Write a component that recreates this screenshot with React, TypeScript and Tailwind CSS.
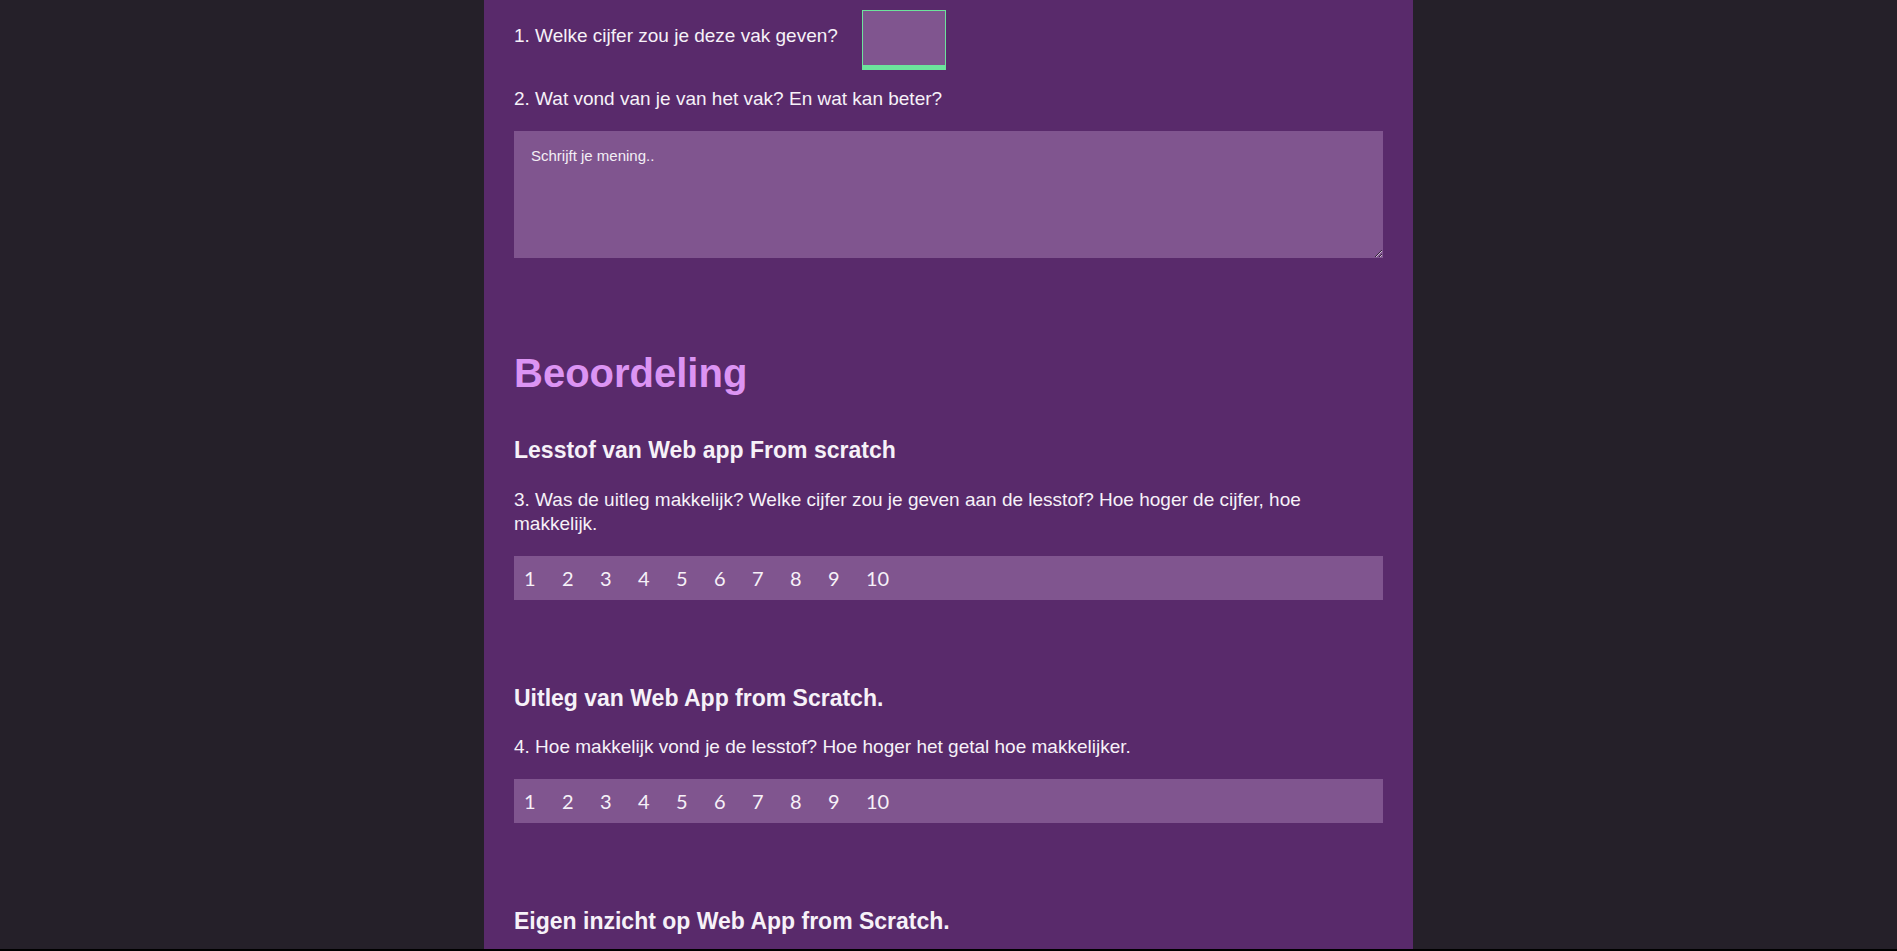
import { useState } from 'react';

const SCORES = [1, 2, 3, 4, 5, 6, 7, 8, 9, 10];

function ScoreBar({ name }: { name: string }) {
  const [picked, setPicked] = useState<number | null>(null);

  return (
    <div className="mt-[20px] flex h-[44px] items-center bg-[#80558f] pl-[10px]">
      {SCORES.map((n) => (
        <label
          key={n}
          className={`w-[38px] shrink-0 cursor-pointer font-['Lato',sans-serif] text-[20px] ${
            picked === n ? 'text-[#6ce39c]' : 'text-[#f6f1f8]'
          }`}
        >
          <input
            type="radio"
            name={name}
            className="hidden"
            checked={picked === n}
            onChange={() => setPicked(n)}
          />
          {n}
        </label>
      ))}
    </div>
  );
}

export default function App() {
  return (
    <div className="min-h-screen bg-[#252029] font-['Liberation_Sans','Noto_Sans',sans-serif] text-[#f6f1f8]">
      <main className="mx-auto min-h-screen w-[929px] bg-[#592a6b] px-[30px] pb-[80px] text-[19px] leading-[24px]">
        {/* vraag 1 */}
        <div className="flex items-start pt-[10px]">
          <p className="mt-[14px]">1. Welke cijfer zou je deze vak geven?</p>
          <input
            type="text"
            className="ml-[24px] h-[60px] w-[84px] border border-b-[5px] border-[#6ce39c] bg-[#80558f] outline-none"
          />
        </div>

        <p className="mt-[17px]">2. Wat vond van je van het vak? En wat kan beter?</p>

        <textarea
          placeholder="Schrijft je mening.."
          className="mt-[20px] block h-[127px] w-full bg-[#80558f] px-[17px] py-[15px] text-[15px] leading-[20px] text-white outline-none placeholder:text-[#f3eef5]"
        />

        <h2 className="mt-[93px] text-[40px] font-bold leading-[44px] text-[#dc94f3]">Beoordeling</h2>

        <h3 className="mt-[41px] text-[23px] font-bold leading-[28px]">Lesstof van Web app From scratch</h3>
        <p className="mt-[24px]">
          3. Was de uitleg makkelijk? Welke cijfer zou je geven aan de lesstof? Hoe hoger de cijfer, hoe
          makkelijk.
        </p>
        <ScoreBar name="lesstof" />

        <h3 className="mt-[84px] text-[23px] font-bold leading-[28px]">Uitleg van Web App from Scratch.</h3>
        <p className="mt-[23px]">4. Hoe makkelijk vond je de lesstof? Hoe hoger het getal hoe makkelijker.</p>
        <ScoreBar name="uitleg" />

        <h3 className="mt-[84px] text-[23px] font-bold leading-[28px]">Eigen inzicht op Web App from Scratch.</h3>
      </main>
      <div className="fixed inset-x-0 bottom-0 h-[2px] bg-black" />
    </div>
  );
}
